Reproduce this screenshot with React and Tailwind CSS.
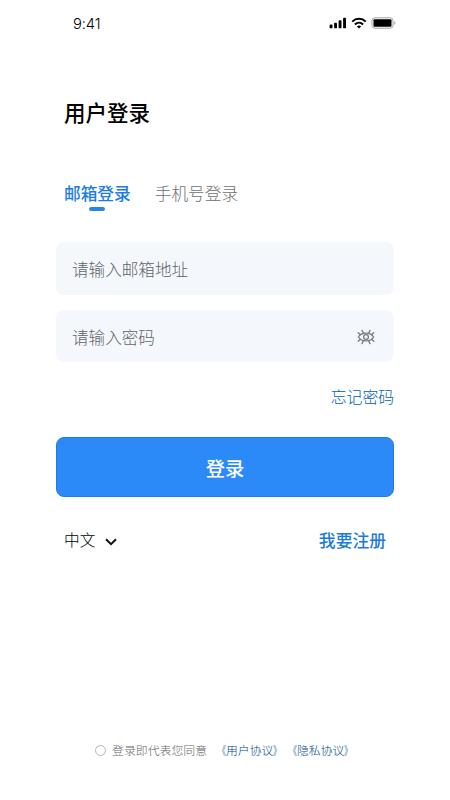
import { useState } from 'react'

const tabs = ['邮箱登录', '手机号登录']

const StatusBar = () => (
  <div className="flex h-[46px] items-center justify-between pl-[73px] pr-[54px]">
    <span className="font-['Inter'] text-[14.8px] font-light leading-5 tracking-[-0.15px] text-black mt-0.5">9:41</span>
    <div className="flex items-center">
      <svg width="18" height="12" viewBox="0 0 18 12" fill="#000">
        <rect x="0.6" y="7.6" width="2.9" height="3.7" rx="0.9" />
        <rect x="5.1" y="5.8" width="2.9" height="5.5" rx="0.9" />
        <rect x="9.6" y="3.2" width="2.9" height="8.1" rx="0.9" />
        <rect x="14.1" y="0.8" width="2.9" height="10.5" rx="0.9" />
      </svg>
      <svg className="ml-1 -mt-px" width="16" height="12" viewBox="0 0 16 12" fill="none" stroke="#000" strokeWidth="2">
        <path d="M1.2 4.6 a9.8 9.8 0 0 1 13.6 0" />
        <path d="M3.9 7.4 a6 6 0 0 1 8.2 0" />
        <path d="M8 11.6 L5.8 9.5 a3.2 3.2 0 0 1 4.4 0 Z" fill="#000" stroke="none" />
      </svg>
      <svg className="ml-1 -mt-px" width="25" height="12" viewBox="0 0 25 12">
        <rect x="1" y="0.8" width="21" height="10.4" rx="2.8" fill="none" stroke="#a3a3a3" />
        <rect x="2.5" y="2.2" width="18" height="7.6" rx="1" fill="#000" />
        <path d="M23.3 4.3 v3.6 a2 2 0 0 0 0-3.6" fill="#999" />
      </svg>
    </div>
  </div>
)

const EyeIcon = () => (
  <svg className="mt-0.5 shrink-0" width="18" height="16" viewBox="0 0 18 16" fill="none" stroke="#777a7d" strokeWidth="1.3" strokeLinecap="round">
    <path d="M1.4 8 C4.6 2.8 13.4 2.8 16.6 8 C13.4 13.2 4.6 13.2 1.4 8 Z" />
    <circle cx="9" cy="8" r="2.4" />
    <path d="M6.2 3.8 L5 1.4 M11.8 3.8 L13 1.4 M3.2 5.6 L1.2 3.8 M14.8 5.6 L16.8 3.8" />
    <path d="M6.2 12.2 L5 14.6 M11.8 12.2 L13 14.6 M3.2 10.4 L1.2 12.2 M14.8 10.4 L16.8 12.2" />
  </svg>
)

// half width brackets, squeezed towards the title
const Agreement = ({ title }) => (
  <a className="flex [font-feature-settings:'halt']">
    <span className="origin-right scale-x-70">《</span>
    {title}
    <span className="origin-left scale-x-70">》</span>
  </a>
)

const inputClass = "w-full min-w-0 bg-transparent pt-0.5 text-[16.6px] font-light outline-none placeholder:text-[#5f6265]"

export default function App() {
  const [tab, setTab] = useState(0)
  const [agree, setAgree] = useState(false)
  return (
    <div className="flex h-[800px] w-[450px] flex-col bg-white font-['Noto_Sans_CJK_SC',sans-serif]">
      <StatusBar />
      <main className="flex flex-col px-14">
        <h1 className="mt-[50px] pl-2 text-[21.5px] font-medium leading-8 text-black">用户登录</h1>
        <div className="mt-[52px] flex gap-6 pl-2 text-[16.7px] leading-[26px]">
          {tabs.map((name, i) => (
            <button
              key={name}
              onClick={() => setTab(i)}
              className={`flex flex-col items-center ${i === tab ? 'font-medium text-[#1b7de0]' : 'font-light text-[#707070]'}`}>
              {name}
              {i === tab && <span className="mt-px h-1 w-4 rounded-full bg-[#2b83e6]" />}
            </button>
          ))}
        </div>
        <div className="mt-[31px] flex h-[53px] items-center rounded-lg bg-[#f4f8fc] px-4">
          <input type="email" placeholder="请输入邮箱地址" className={inputClass} />
        </div>
        <div className="mt-[15px] flex h-[52px] items-center rounded-lg bg-[#f4f8fc] pl-4 pr-[19px]">
          <input type="password" placeholder="请输入密码" className={inputClass} />
          <EyeIcon />
        </div>
        <a className="mt-[23px] self-end text-[15.8px] font-light leading-6 text-[#0060b0]">忘记密码</a>
        <button className="mt-[28px] h-[60px] rounded-lg border border-[#1b7ce4] bg-[#2b89f8] pt-0.5 text-[19.3px] font-medium text-white">登录</button>
        <div className="mt-[31px] flex items-center justify-between px-2 leading-6">
          <button className="flex items-center text-[15.7px] font-light text-black">
            中文
            <svg className="ml-2.5 mt-1" width="12" height="8" viewBox="0 0 12 8" fill="none" stroke="#111" strokeWidth="2">
              <path d="M1 1.2 L6 6.2 L11 1.2" />
            </svg>
          </button>
          <a className="text-[16.8px] font-medium text-[#1b7bd8]">我要注册</a>
        </div>
      </main>
      <footer className="mb-10 mt-auto flex items-center pl-[95px] text-[11.9px] font-light leading-5">
        <button
          onClick={() => setAgree(!agree)}
          className={`mr-1.5 size-[11px] rounded-full border border-[#b5b5b5] ${agree ? 'bg-[#2b89f8]' : ''}`} />
        <span className="text-[#666]">登录即代表您同意</span>
        <div className="ml-[13px] flex gap-3 text-[11.8px] text-[#004a8c]">
          <Agreement title="用户协议" />
          <Agreement title="隐私协议" />
        </div>
      </footer>
    </div>
  )
}
